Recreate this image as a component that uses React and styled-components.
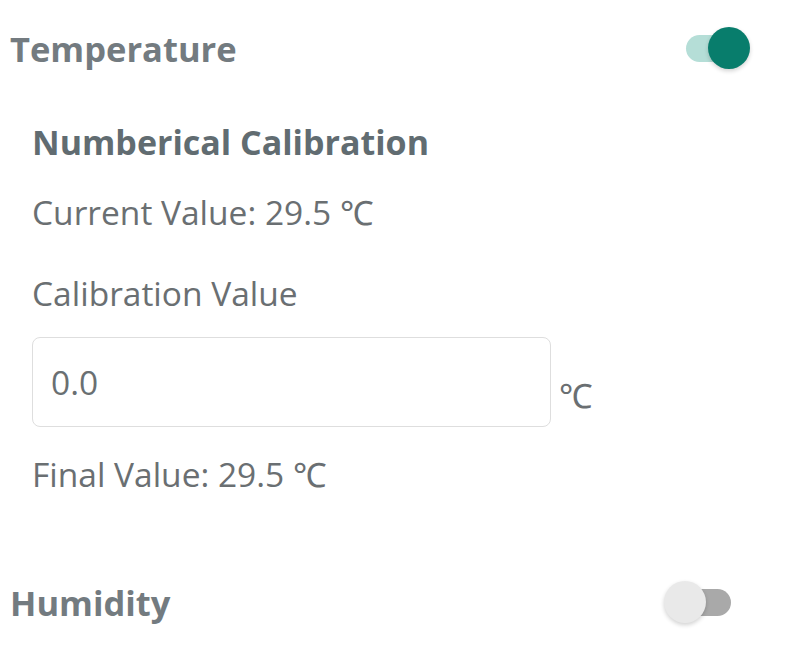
import React, { useState } from "react";
import styled, { createGlobalStyle } from "styled-components";

const GlobalStyle = createGlobalStyle`
  body {
    margin: 0;
    background: #ffffff;
    font-family: "Open Sans", "Noto Sans", sans-serif;
  }
`;

function Toggle({ on, onClick }) {
  return (
    <Switch onClick={onClick}>
      <Track $on={on} />
      <Thumb $on={on} />
    </Switch>
  );
}

function App() {
  const [temp, setTemp] = useState(true);
  const [hum, setHum] = useState(false);
  const [value, setValue] = useState("0.0");

  return (
    <>
      <GlobalStyle />
      <Page>
        <HeaderRow $right={40}>
          <Title>Temperature</Title>
          <Toggle on={temp} onClick={() => setTemp(!temp)} />
        </HeaderRow>
        <Section>
          <SubTitle>Numberical Calibration</SubTitle>
          <Line>Current Value: 29.5 ℃</Line>
          <Line $top={41}>Calibration Value</Line>
          <InputRow>
            <Field value={value} onChange={(e) => setValue(e.target.value)} />
            <Unit>℃</Unit>
          </InputRow>
          <Line $top={27}>Final Value: 29.5 ℃</Line>
        </Section>
        <HeaderRow $top={60} $right={56}>
          <Title>Humidity</Title>
          <Toggle on={hum} onClick={() => setHum(!hum)} />
        </HeaderRow>
      </Page>
    </>
  );
}

export default App;

const Page = styled.div`
  width: 790px;
  display: flex;
  flex-direction: column;
`;

const HeaderRow = styled.div`
  display: flex;
  align-items: center;
  justify-content: space-between;
  height: 96px;
  margin-top: ${(p) => p.$top || 0}px;
  padding: 0 ${(p) => p.$right}px 0 10px;
`;

const Title = styled.div`
  font-size: 34.5px;
  font-weight: 700;
  color: #737b80;
`;

const SubTitle = styled.div`
  font-size: 34px;
  line-height: 40px;
  font-weight: 700;
  color: #616c71;
`;

const Section = styled.div`
  display: flex;
  flex-direction: column;
  padding-left: 32px;
  margin-top: 26px;
`;

const Line = styled.div`
  font-size: 33.5px;
  line-height: 40px;
  color: #6a6f72;
  margin-top: ${(p) => p.$top || 30}px;
`;

const InputRow = styled.div`
  display: flex;
  align-items: flex-end;
  margin-top: 24px;
`;

const Field = styled.input`
  box-sizing: border-box;
  width: 519px;
  height: 90px;
  border: 1.5px solid #dedede;
  border-radius: 8px;
  padding: 0 18px;
  font-family: "Open Sans", "Noto Sans", sans-serif;
  font-size: 33.5px;
  color: #6a6f72;
  outline: none;
`;

const Unit = styled.span`
  font-size: 33.5px;
  line-height: 40px;
  color: #6a6f72;
  margin: 0 0 12px 8px;
`;

const Switch = styled.div`
  position: relative;
  width: 70px;
  height: 44px;
  cursor: pointer;
`;

const Track = styled.div`
  position: absolute;
  left: 6px;
  right: 3px;
  top: 9px;
  bottom: 8px;
  border-radius: 14px;
  background: ${(p) => (p.$on ? "#b5ded7" : "#a9a9a9")};
`;

const Thumb = styled.div`
  position: absolute;
  top: 1px;
  ${(p) => (p.$on ? "right: 0;" : "left: 0;")}
  width: 42px;
  height: 42px;
  border-radius: 50%;
  background: ${(p) => (p.$on ? "#087d6c" : "#e9e9e9")};
  box-shadow: 0 2px 4px rgba(0, 0, 0, 0.18);
`;
